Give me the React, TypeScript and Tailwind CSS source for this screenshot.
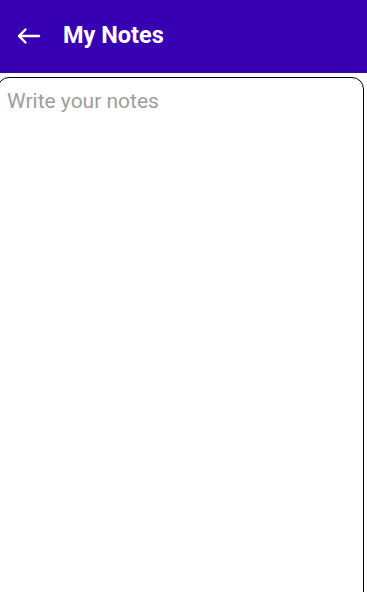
import React from "react";

export default function App() {
  return (
    <div className="w-[367px] h-[592px] overflow-hidden bg-white" style={{ fontFamily: "Roboto, 'Noto Sans', sans-serif" }}>
      {/* App bar */}
      <div className="h-[73px] bg-[#3700b3] flex items-center px-[16px]">
        <svg width="25" height="24" viewBox="0 0 25 24" className="text-white -mt-[2px]" fill="none" stroke="currentColor" strokeWidth="2.4" strokeLinecap="round" strokeLinejoin="round">
          <path d="M23 12H3" />
          <path d="M9.5 5.5L3 12l6.5 6.5" />
        </svg>
        <h1 className="ml-[22px] -mt-[3px] text-white text-[23.5px] font-bold leading-[28px]">My Notes</h1>
      </div>

      {/* Notes input */}
      <div className="mt-[4px] ml-[-3px] w-[367px]">
        <textarea
          placeholder="Write your notes"
          className="block w-full h-[540px] resize-none border border-black rounded-[12px] pl-[9px] pt-[11px] text-[21px] leading-[24px] text-gray-800 placeholder:text-[#9e9e9e] outline-none"
        />
      </div>
    </div>
  );
}
